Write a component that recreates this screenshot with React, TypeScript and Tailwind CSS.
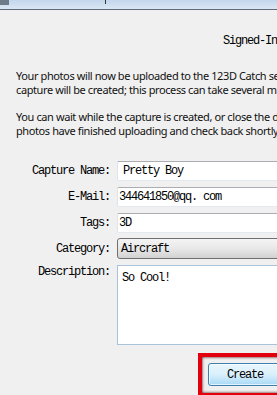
import React from 'react'

const mono = "font-['Liberation_Mono','DejaVu_Sans_Mono',monospace] text-[12px] tracking-[-1.2px] text-black"

// Win7 style text box border
const boxBorder = 'border border-[#e2e3ea] border-t-[#abadb3] border-b-[#e3e9ef] bg-white rounded-[2px]'

function Row({ label, children }: { label: string; children: React.ReactNode }) {
    return (
        <div className="flex items-center">
            <div className={`w-[110px] text-right whitespace-nowrap ${mono}`}>{label}</div>
            <div className="ml-[7px]">{children}</div>
        </div>
    )
}

export default function App() {
    return (
        <div className="w-[277px] h-[395px] overflow-hidden bg-[#f0f0f0]">
            <div className="w-[420px]">
                {/* Title bar (mostly cut off) */}
                <div className="h-[10px] bg-gradient-to-b from-[#c3d6ec] to-[#dbe7f4] border-b border-[#5f6b78] relative">
                    <div className="absolute left-0 top-0 w-[9px] h-[5px] bg-[#6d7a88]" />
                    <div className="absolute left-[105px] top-0 w-[1px] h-[4px] bg-[#333]" />
                </div>

                <div className={`pt-[24px] pl-[223px] leading-[14px] whitespace-nowrap ${mono}`}>
                    Signed-In as Pretty Boy
                </div>

                <div className="pl-[16px] pt-[21px] font-['Noto_Sans','Open_Sans',sans-serif] text-[11px] leading-[14px] tracking-[-0.4px] text-[#111] whitespace-nowrap">
                    <p>Your photos will now be uploaded to the 123D Catch servers and your</p>
                    <p>capture will be created; this process can take several minutes.</p>
                    <p className="mt-[13px]">You can wait while the capture is created, or close the dialog once your</p>
                    <p>photos have finished uploading and check back shortly.</p>
                </div>

                {/* Form */}
                <div className="mt-[23px] flex flex-col gap-[6px]">
                    <Row label="Capture Name:">
                        <div className={`w-[300px] h-[20px] flex items-center pl-[5px] ${boxBorder} ${mono}`}>Pretty Boy</div>
                    </Row>
                    <Row label="E-Mail:">
                        <div className={`w-[300px] h-[20px] flex items-center pl-[1px] ${boxBorder} ${mono}`}>344641850@qq. com</div>
                    </Row>
                    <Row label="Tags:">
                        <div className={`w-[300px] h-[20px] flex items-center pl-[1px] ${boxBorder} ${mono}`}>3D</div>
                    </Row>
                    <div className="flex items-center -mt-[1px]">
                        <div className={`w-[110px] text-right ${mono}`}>Category:</div>
                        <div className={`ml-[7px] w-[300px] h-[21px] flex items-center pl-[3px] rounded-[3px] border border-[#707070] bg-gradient-to-b from-[#f4f4f4] via-[#e8e8e8] to-[#d2d2d2] ${mono}`}>
                            Aircraft
                        </div>
                    </div>
                    <div className="flex items-start">
                        <div className={`w-[110px] text-right leading-[14px] ${mono}`}>Description:</div>
                        <div className={`ml-[7px] w-[300px] h-[80px] pt-[5px] pl-[4px] leading-[14px] bg-white border border-[#aac3dc] ${mono}`}>
                            So Cool!
                        </div>
                    </div>
                </div>

                {/* Create button with red highlight */}
                <div className="mt-[8px] ml-[198px] w-[120px] h-[44px] border-[4px] border-[#e2000c] shadow-[inset_0_0_3px_#400] pl-[6px] pt-[6px]">
                    <div className="w-[74px] h-[23px] rounded-[3px] border border-[#3c7fb1] bg-gradient-to-b from-[#eaf6fd] via-[#d9f0fc] to-[#a7d9f5] shadow-[inset_0_0_0_1px_#ffffffb0] flex items-center justify-center">
                        <span className={mono}>Create</span>
                    </div>
                </div>
            </div>
        </div>
    )
}
